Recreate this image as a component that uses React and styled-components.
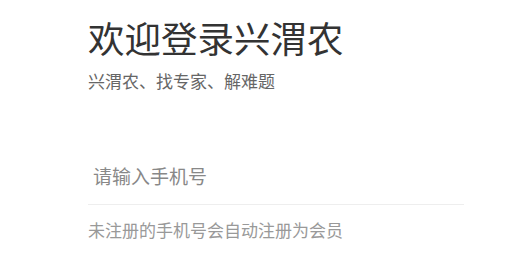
import React from "react";
import styled, { createGlobalStyle } from "styled-components";

const GlobalStyle = createGlobalStyle`
  html, body { margin: 0; padding: 0; background: #fff; }
  body { font-family: "Noto Sans CJK SC", "Noto Sans", sans-serif; }
  * { box-sizing: border-box; }
`;

const Page = styled.div`
  display: flex;
  flex-direction: column;
  width: 515px;
  height: 262px;
  padding: 20px 51px 0 88px;
  background: #fff;
`;

const Title = styled.h1`
  margin: 0;
  font-size: 36.5px;
  line-height: 36px;
  font-weight: 400;
  color: #333;
`;

const Subtitle = styled.p`
  margin: 16px 0 0;
  font-size: 17px;
  line-height: 17px;
  color: #666;
`;

const Field = styled.div`
  display: flex;
  align-items: center;
  height: 59px;
  margin-top: 57px;
  border-bottom: 1px solid #eeeeee;
`;

const Input = styled.input`
  flex: 1;
  border: none;
  outline: none;
  background: transparent;
  padding: 0 0 0 5px;
  font-family: "Noto Sans CJK SC", "Noto Sans", sans-serif;
  font-size: 19px;
  line-height: 19px;
  color: #333;
  &::placeholder { color: #888; }
`;

const Hint = styled.p`
  margin: 16px 0 0;
  font-size: 17px;
  line-height: 17px;
  color: #999;
`;

export default function App() {
  return (
    <>
      <GlobalStyle />
      <Page>
        <Title>欢迎登录兴渭农</Title>
        <Subtitle>兴渭农、找专家、解难题</Subtitle>
        <Field>
          <Input type="tel" placeholder="请输入手机号" />
        </Field>
        <Hint>未注册的手机号会自动注册为会员</Hint>
      </Page>
    </>
  );
}
